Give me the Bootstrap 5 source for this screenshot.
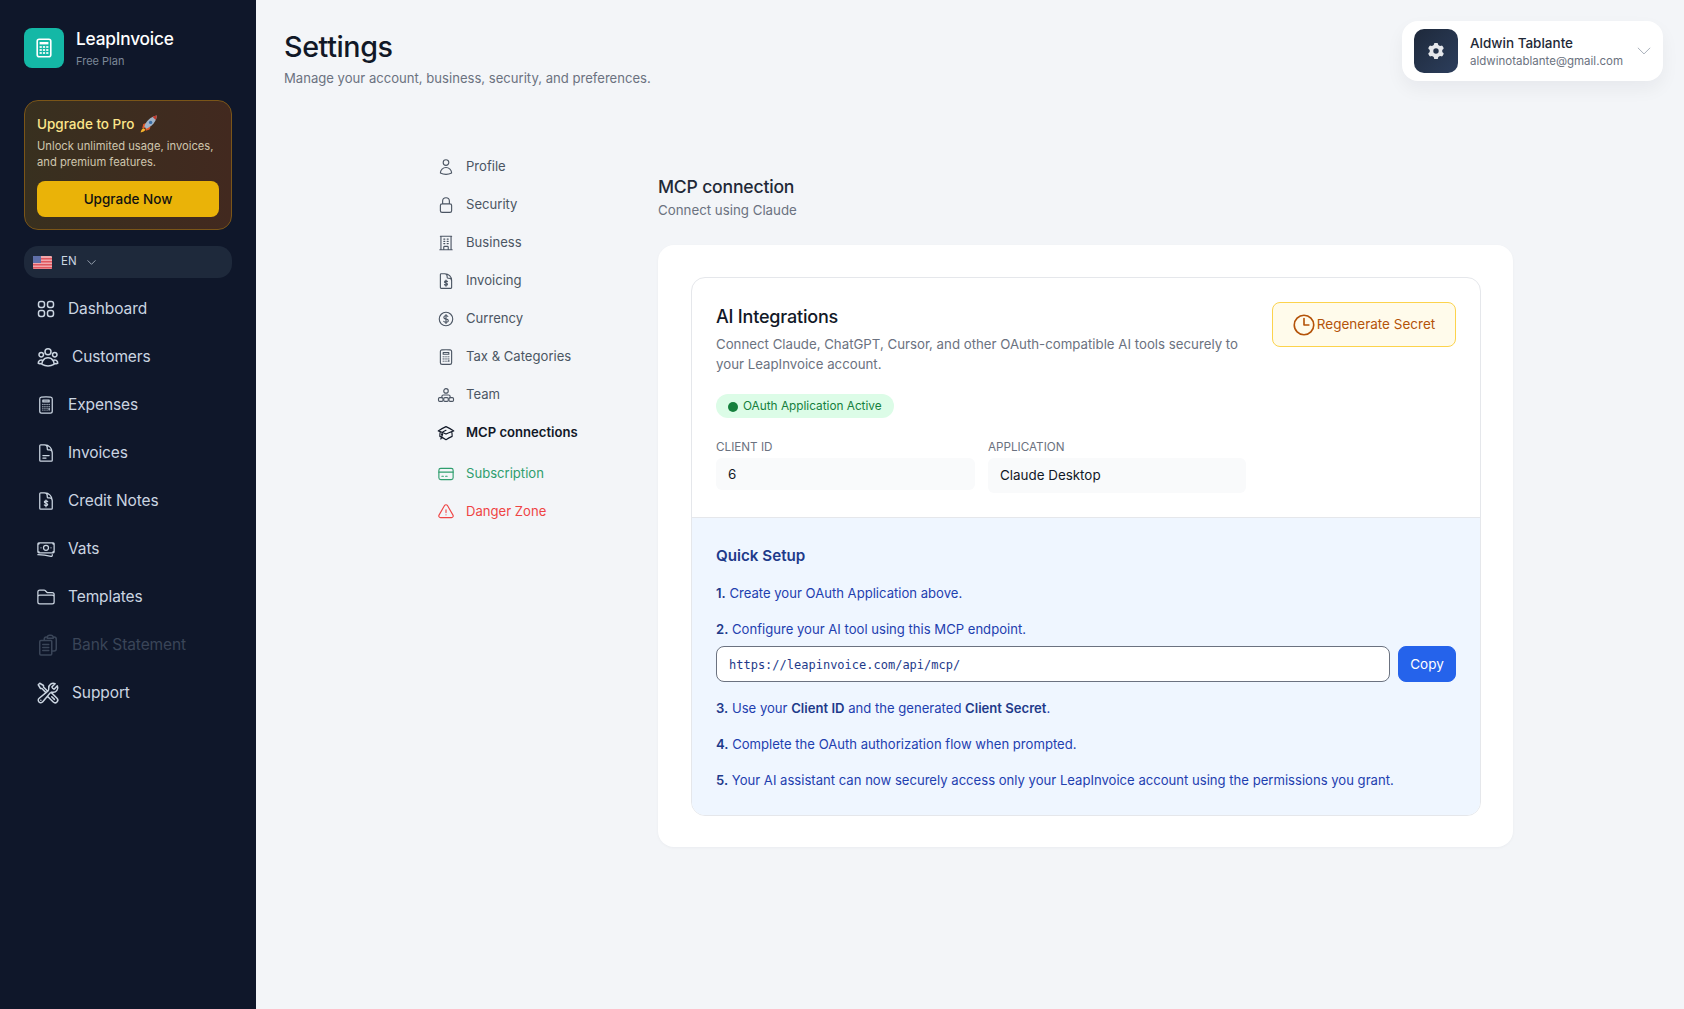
<!DOCTYPE html>
<html lang="en">
<head>
  <meta charset="UTF-8">
  <meta name="viewport" content="width=device-width, initial-scale=1.0">
  <title>LeapInvoice Settings</title>
  <link href="https://cdn.jsdelivr.net/npm/bootstrap@5.3.0/dist/css/bootstrap.min.css" rel="stylesheet">
  <style>
    body { font-family: Inter, "Noto Sans", sans-serif; background: #f3f5f8; color: #111827; height: 1009px; overflow: hidden; }
    svg { display: block; flex: none; }
    .ico { fill: none; stroke: currentColor; stroke-width: 1.5; stroke-linecap: round; stroke-linejoin: round; }

    /* sidebar */
    .side { width: 256px; height: 1009px; background: #0f172a; flex: none; padding: 26px 24px 0; }
    .logo-box { width: 40px; height: 40px; border-radius: 8px; background: #14b8a6; color: #fff; }
    .logo-name { font-size: 17.3px; font-weight: 500; color: #fff; line-height: 24px; letter-spacing: -.2px; margin-top: 1px; }
    .logo-plan { font-size: 11px; color: #7c8798; line-height: 16px; margin-top: 2px; }
    .promo { margin-top: 31px; height: 130px; border: 1px solid #7a5518; border-radius: 14px; padding: 13px 12px; background: linear-gradient(90deg, #38301f, #42291f); }
    .promo-title { font-size: 13.5px; font-weight: 500; color: #fde68a; height: 20px; }
    .promo-text { font-size: 11.2px; color: #cfc6ae; line-height: 16px; margin-top: 4px; }
    .promo-btn { height: 36px; margin-top: 11px; border-radius: 8px; background: #eab308; color: #111; font-size: 13.5px; font-weight: 500; line-height: 36px; text-align: center; }
    .lang { margin-top: 16px; height: 32px; border-radius: 14px; background: #1e293b; padding-left: 9px; color: #cbd5e1; font-size: 11.5px; gap: 9px; }
    .menu { margin-top: 7px; }
    .menu-item { height: 48px; padding-left: 12px; gap: 12px; color: #cbd5e1; font-size: 15.5px; letter-spacing: -.1px; }
    .menu-item.off { color: #3a4558; }

    /* page head */
    .page { min-width: 0; }
    .page-head { padding: 21px 21px 0 28px; height: 147px; }
    .page-title { font-size: 28.7px; font-weight: 500; line-height: 52px; margin: 0; color: #111827; letter-spacing: -.4px; }
    .page-sub { font-size: 13.1px; color: #6b7280; line-height: 20px; margin-top: -5px; }
    .user-box { width: 261px; height: 60px; background: #fff; border-radius: 16px; padding: 0 12px; gap: 12px; box-shadow: 0 8px 18px rgba(15, 23, 42, .05); }
    .user-pic { width: 44px; height: 44px; border-radius: 10px; background: linear-gradient(135deg, #1e293b, #2c3e5c); color: #e5e7eb; }
    .user-info { padding-top: 2px; }
    .user-name { font-size: 13.5px; font-weight: 500; line-height: 18px; color: #1f2937; }
    .user-mail { font-size: 11.5px; line-height: 17px; color: #6b7280; margin-top: 1px; }
    .user-caret { color: #9ca3af; }

    /* settings nav */
    .set-wrap { padding-left: 176px; }
    .set-nav { width: 226px; flex: none; margin-top: 1px; }
    .set-item { height: 38px; gap: 11px; padding-left: 5px; color: #4b5563; font-size: 13.1px; }
    .set-item.now { color: #111827; font-weight: 600; }
    .set-item.sub { color: #2f9e6e; margin-top: 3px; }
    .set-item.danger { color: #ef4444; }

    /* content */
    .set-main { width: 855px; flex: none; padding-top: 28px; }
    .sec-title { font-size: 17.6px; font-weight: 500; line-height: 24px; color: #1f2937; letter-spacing: -.2px; }
    .sec-sub { font-size: 13.3px; color: #6b7280; line-height: 20px; margin-top: 1px; }
    .big-box { margin-top: 25px; background: #fff; border-radius: 16px; padding: 32px 32px 32px 33px; height: 602px; box-shadow: 0 1px 3px rgba(15, 23, 42, .04); }
    .inner-box { border: 1px solid #e5e7eb; border-radius: 14px; overflow: hidden; height: 539px; }
    .top-part { height: 240px; padding: 24px 24px 0; border-bottom: 1px solid #e5e7eb; }
    .top-left { width: 531px; }
    .int-title { font-size: 18px; font-weight: 500; line-height: 26px; color: #111827; letter-spacing: -.2px; margin-top: 2px; }
    .int-text { font-size: 13.25px; line-height: 20px; color: #6b7280; margin-top: 4px; }
    .state-pill { height: 24px; margin-top: 20px; padding: 1px 12px 0; border-radius: 12px; background: #dcfce7; color: #15803d; font-size: 11.8px; gap: 5px; }
    .state-dot { width: 10px; height: 10px; border-radius: 50%; background: #15803d; }
    .fld-grid { grid-template-columns: 259px 258px; column-gap: 13px; align-items: start; }
    .fld-label { font-size: 11.7px; color: #6b7280; line-height: 16px; margin-top: 21px; }
    .fld-val { background: #f9fafb; border-radius: 6px; padding: 0 12px; margin-top: 3px; font-size: 13.4px; color: #111827; }
    .fld-a { height: 32px; }
    .fld-b { height: 35px; }
    .regen { width: 184px; height: 45px; margin-left: 25px; padding-right: 2px; border: 1px solid #fcd34d; border-radius: 8px; background: #fffbeb; color: #b45309; font-size: 13.5px; }
    .quick { height: 297px; background: #eff6ff; padding: 26px 24px; color: #1e40af; font-size: 13.1px; }
    .quick-title { font-size: 15.2px; font-weight: 600; color: #1e3a8a; line-height: 24px; }
    .step { line-height: 20px; margin-top: 16px; }
    .step-first { margin-top: 15px; }
    .step b { font-weight: 600; color: #1e3a8a; }
    .url-row { margin-top: 7px; }
    .url-input { height: 36px; border: 1px solid #6b7280; border-radius: 8px; padding: 1px 12px 0; font-family: "DejaVu Sans Mono", monospace; font-size: 12px; color: #1e3a8a; background: #fff; }
    .copy-btn { width: 58px; height: 36px; padding: 0; border-radius: 8px; background: #2563eb; border-color: #2563eb; font-size: 13.5px; }
  </style>
</head>
<body>
<div class="d-flex">
  <aside class="side">
    <div class="d-flex align-items-center gap-2">
      <div class="logo-box d-flex align-items-center justify-content-center me-1">
        <svg width="20" height="20" viewBox="0 0 20 20"><rect x="3.2" y="1.2" width="13.6" height="17.6" rx="2" fill="none" stroke="#fff" stroke-width="1.6"/><rect x="5.6" y="4" width="8.8" height="2.4" fill="#fff"/><g fill="#fff" opacity=".85"><rect x="5.6" y="8" width="2.2" height="2"/><rect x="8.9" y="8" width="2.2" height="2"/><rect x="12.2" y="8" width="2.2" height="2"/><rect x="5.6" y="11" width="2.2" height="2"/><rect x="8.9" y="11" width="2.2" height="2"/><rect x="12.2" y="11" width="2.2" height="2"/><rect x="5.6" y="14" width="2.2" height="2"/><rect x="8.9" y="14" width="2.2" height="2"/><rect x="12.2" y="14" width="2.2" height="2"/></g></svg>
      </div>
      <div>
        <div class="logo-name">LeapInvoice</div>
        <div class="logo-plan">Free Plan</div>
      </div>
    </div>

    <div class="promo">
      <div class="promo-title d-flex align-items-center gap-1">Upgrade to Pro
        <svg width="21" height="21" viewBox="0 0 20 20"><path d="M7 13l-3 .5 1-4 3-1z" fill="#e0582a"/><path d="M7 13l.5 3 3.500-1.200 1-3z" fill="#e0582a"/><path d="M2.500 17.500c.3-2 1.200-3.600 3-4l1.500 1.500c-.5 1.600-2.400 2.300-4.500 2.500z" fill="#f7b32b"/><path d="M6 12c1.500-5 6-9.500 12-10.500C17.500 7.500 13 12 8 14z" fill="#9fb3c8"/><path d="M18 1.500c-.2 1.500-.6 2.900-1.200 4.200l-3-3c1.300-.6 2.700-1 4.200-1.200z" fill="#c0392b"/><circle cx="12" cy="8" r="1.600" fill="#3b6ea5"/></svg>
      </div>
      <div class="promo-text">Unlock unlimited usage, invoices, and premium features.</div>
      <div class="promo-btn">Upgrade Now</div>
    </div>

    <div class="lang d-flex align-items-center">
      <svg width="19" height="13" viewBox="0 0 19 13"><rect width="19" height="13" rx="1" fill="#f1a7ab"/><g fill="#e0575f"><rect y="2" width="19" height="1.500"/><rect y="5" width="19" height="1.500"/><rect y="8" width="19" height="1.500"/><rect y="11" width="19" height="1.500"/></g><rect width="8" height="7" fill="#5f6fa8"/></svg>
      <span>EN</span>
      <svg class="ico" width="11" height="11" viewBox="0 0 24 24"><path d="m4 8 8 8 8-8"/></svg>
    </div>

    <nav class="menu">
      <div class="menu-item d-flex align-items-center">
        <svg class="ico" width="20" height="20" viewBox="0 0 20 20"><rect x="2.500" y="2.500" width="6" height="6" rx="2.200"/><rect x="11.500" y="2.500" width="6" height="6" rx="2.200"/><rect x="2.500" y="11.500" width="6" height="6" rx="2.200"/><rect x="11.500" y="11.500" width="6" height="6" rx="2.200"/></svg>
        <span>Dashboard</span>
      </div>
      <div class="menu-item d-flex align-items-center">
        <svg class="ico" width="24" height="24" viewBox="0 0 24 24"><path d="M18 18.720a9.094 9.094 0 0 0 3.741-.479 3 3 0 0 0-4.682-2.720m.94 3.198.001.031c0 .225-.012.447-.037.666A11.944 11.944 0 0 1 12 21c-2.170 0-4.207-.576-5.963-1.584A6.062 6.062 0 0 1 6 18.719m12 0a5.971 5.971 0 0 0-.941-3.197m0 0A5.995 5.995 0 0 0 12 12.750a5.995 5.995 0 0 0-5.058 2.772m0 0a3 3 0 0 0-4.681 2.720 8.986 8.986 0 0 0 3.740.477m.94-3.197a5.971 5.971 0 0 0-.94 3.197M15 6.750a3 3 0 1 1-6 0 3 3 0 0 1 6 0Zm6 3a2.250 2.250 0 1 1-4.500 0 2.250 2.250 0 0 1 4.500 0Zm-13.500 0a2.250 2.250 0 1 1-4.500 0 2.250 2.250 0 0 1 4.500 0Z"/></svg>
        <span>Customers</span>
      </div>
      <div class="menu-item d-flex align-items-center">
        <svg class="ico" width="20" height="20" viewBox="0 0 24 24"><path d="M15.750 15.750V18m-7.500-6.750h.008v.008H8.250v-.008Zm0 2.250h.008v.008H8.250V13.500Zm0 2.250h.008v.008H8.250v-.008Zm0 2.250h.008v.008H8.250V18Zm2.498-6.750h.007v.008h-.007v-.008Zm0 2.250h.007v.008h-.007V13.500Zm0 2.250h.007v.008h-.007v-.008Zm0 2.250h.007v.008h-.007V18Zm2.504-6.750h.008v.008h-.008v-.008Zm0 2.250h.008v.008h-.008V13.500Zm0 2.250h.008v.008h-.008v-.008Zm0 2.250h.008v.008h-.008V18Zm2.498-6.750h.008v.008h-.008v-.008Zm0 2.250h.008v.008h-.008V13.500ZM8.250 6h7.500v2.250h-7.500V6ZM12 2.250c-1.892 0-3.758.110-5.593.322C5.307 2.700 4.500 3.650 4.500 4.757V19.500a2.250 2.250 0 0 0 2.250 2.250h10.500a2.250 2.250 0 0 0 2.250-2.250V4.757c0-1.108-.806-2.057-1.907-2.185A48.507 48.507 0 0 0 12 2.250Z"/></svg>
        <span>Expenses</span>
      </div>
      <div class="menu-item d-flex align-items-center">
        <svg class="ico" width="20" height="20" viewBox="0 0 24 24"><path d="M19.500 14.250v-2.625a3.375 3.375 0 0 0-3.375-3.375h-1.500A1.125 1.125 0 0 1 13.500 7.125v-1.500a3.375 3.375 0 0 0-3.375-3.375H8.250m0 12.750h7.500m-7.500 3H12M10.500 2.250H5.625c-.621 0-1.125.504-1.125 1.125v17.250c0 .621.504 1.125 1.125 1.125h12.750c.621 0 1.125-.504 1.125-1.125V11.250a9 9 0 0 0-9-9Z"/></svg>
        <span>Invoices</span>
      </div>
      <div class="menu-item d-flex align-items-center">
        <svg class="ico" width="20" height="20" viewBox="0 0 24 24"><path d="M19.500 14.250v-2.625a3.375 3.375 0 0 0-3.375-3.375h-1.500A1.125 1.125 0 0 1 13.500 7.125v-1.500a3.375 3.375 0 0 0-3.375-3.375H8.250M10.500 2.250H5.625c-.621 0-1.125.504-1.125 1.125v17.250c0 .621.504 1.125 1.125 1.125h12.750c.621 0 1.125-.504 1.125-1.125V11.250a9 9 0 0 0-9-9Z"/><path d="M14 12.800c-.5-.6-1.200-.9-2-.9-1.200 0-2 .6-2 1.400 0 1.900 4 1 4 2.900 0 .8-.8 1.400-2 1.400-.8 0-1.500-.3-2-.9M12 10.800v8.200"/></svg>
        <span>Credit Notes</span>
      </div>
      <div class="menu-item d-flex align-items-center">
        <svg class="ico" width="20" height="20" viewBox="0 0 24 24"><path d="M2.250 18.750a60.070 60.070 0 0 1 15.797 2.101c.727.198 1.453-.342 1.453-1.096V18.750M3.750 4.500v.75A.75.75 0 0 1 3 6h-.75m0 0v-.375c0-.621.504-1.125 1.125-1.125H20.250M2.250 6v9m18-10.500v.75c0 .414.336.75.75.75h.75m-1.500-1.500h.375c.621 0 1.125.504 1.125 1.125v9.750c0 .621-.504 1.125-1.125 1.125h-.375m1.500-1.500H21a.75.75 0 0 0-.75.75v.75m0 0H3.750m0 0h-.375a1.125 1.125 0 0 1-1.125-1.125V15m1.500 1.500v-.75A.75.75 0 0 0 3 15h-.75M15 10.500a3 3 0 1 1-6 0 3 3 0 0 1 6 0Zm3 0h.008v.008H18V10.500Zm-12 0h.008v.008H6V10.500Z"/></svg>
        <span>Vats</span>
      </div>
      <div class="menu-item d-flex align-items-center">
        <svg class="ico" width="20" height="20" viewBox="0 0 24 24"><path d="M2.250 12.750V12A2.250 2.250 0 0 1 4.500 9.750h15A2.250 2.250 0 0 1 21.750 12v.75m-8.690-6.440-2.120-2.120a1.500 1.500 0 0 0-1.061-.44H4.500A2.250 2.250 0 0 0 2.250 6v12a2.250 2.250 0 0 0 2.250 2.250h15A2.250 2.250 0 0 0 21.750 18V9a2.250 2.250 0 0 0-2.250-2.250h-5.379a1.500 1.500 0 0 1-1.060-.44Z"/></svg>
        <span>Templates</span>
      </div>
      <div class="menu-item off d-flex align-items-center">
        <svg class="ico" width="24" height="24" viewBox="0 0 24 24"><path d="M8.250 7.500V6.108c0-1.135.845-2.098 1.976-2.192.373-.03.748-.057 1.123-.08M15.750 18H18a2.250 2.250 0 0 0 2.250-2.250V6.108c0-1.135-.845-2.098-1.976-2.192a48.424 48.424 0 0 0-1.123-.08M15.750 18.750v2c0 .621-.504 1.125-1.125 1.125h-9.750A1.125 1.125 0 0 1 3.750 20.750V8.625c0-.621.504-1.125 1.125-1.125H15c.414 0 .75.336.75.750ZM17.150 3.836A2.251 2.251 0 0 0 15 2.250h-1.500a2.251 2.251 0 0 0-2.150 1.586m5.800 0c.065.21.1.433.1.664v.75h-6V4.500c0-.231.035-.454.1-.664M6.750 11.500h6m-6 3h6m-6 3h6"/></svg>
        <span>Bank Statement</span>
      </div>
      <div class="menu-item d-flex align-items-center">
        <svg class="ico" width="24" height="24" viewBox="0 0 24 24"><path d="M11.420 15.170 17.250 21A2.652 2.652 0 0 0 21 17.250l-5.877-5.877M11.420 15.170l2.496-3.030c.317-.384.74-.626 1.208-.766M11.420 15.170l-4.655 5.653a2.548 2.548 0 1 1-3.586-3.586l6.837-5.630m5.108-.233c.55-.164 1.163-.188 1.743-.14a4.500 4.500 0 0 0 4.486-6.336l-3.276 3.277a3.004 3.004 0 0 1-2.250-2.250l3.276-3.276a4.500 4.500 0 0 0-6.336 4.486c.091 1.076-.071 2.264-.904 2.950l-.102.085m-1.745 1.437L5.909 7.500H4.500L2.250 3.750l1.500-1.500L7.500 4.500v1.409l4.260 4.260m-1.745 1.437 1.745-1.437m6.615 8.206L15.750 15.750M4.867 19.125h.008v.008h-.008v-.008Z"/></svg>
        <span>Support</span>
      </div>
    </nav>
  </aside>

  <main class="page flex-grow-1">
    <header class="page-head d-flex justify-content-between align-items-start">
      <div>
        <h1 class="page-title">Settings</h1>
        <div class="page-sub">Manage your account, business, security, and preferences.</div>
      </div>
      <div class="user-box d-flex align-items-center">
        <div class="user-pic d-flex align-items-center justify-content-center">
          <svg width="18" height="18" viewBox="0 0 20 20"><path fill="currentColor" fill-rule="evenodd" d="M7.840 1.804A1 1 0 0 1 8.820 1h2.360a1 1 0 0 1 .98.804l.331 1.652a6.993 6.993 0 0 1 1.929 1.115l1.598-.54a1 1 0 0 1 1.186.447l1.180 2.044a1 1 0 0 1-.205 1.251l-1.267 1.113a7.047 7.047 0 0 1 0 2.228l1.267 1.113a1 1 0 0 1 .206 1.250l-1.180 2.045a1 1 0 0 1-1.187.447l-1.598-.54a6.993 6.993 0 0 1-1.929 1.115l-.33 1.652a1 1 0 0 1-.98.804H8.820a1 1 0 0 1-.98-.804l-.331-1.652a6.993 6.993 0 0 1-1.929-1.115l-1.598.54a1 1 0 0 1-1.186-.447l-1.180-2.044a1 1 0 0 1 .205-1.251l1.267-1.114a7.050 7.050 0 0 1 0-2.227L1.821 7.773a1 1 0 0 1-.206-1.250l1.180-2.045a1 1 0 0 1 1.187-.447l1.598.54A6.992 6.992 0 0 1 7.510 3.456l.33-1.652ZM10 13a3 3 0 1 0 0-6 3 3 0 0 0 0 6Z"/></svg>
        </div>
        <div class="user-info flex-grow-1">
          <div class="user-name">Aldwin Tablante</div>
          <div class="user-mail">aldwinotablante@gmail.com</div>
        </div>
        <svg class="ico user-caret" width="14" height="14" viewBox="0 0 24 24"><path d="m2 7 10 10L22 7"/></svg>
      </div>
    </header>

    <div class="set-wrap d-flex align-items-start">
      <nav class="set-nav">
        <div class="set-item d-flex align-items-center">
          <svg class="ico" width="18" height="18" viewBox="0 0 24 24"><path d="M15.750 6a3.750 3.750 0 1 1-7.500 0 3.750 3.750 0 0 1 7.500 0ZM4.501 20.118a7.500 7.500 0 0 1 14.998 0A17.933 17.933 0 0 1 12 21.750c-2.676 0-5.216-.584-7.499-1.632Z"/></svg>
          <span>Profile</span>
        </div>
        <div class="set-item d-flex align-items-center">
          <svg class="ico" width="18" height="18" viewBox="0 0 24 24"><path d="M16.500 10.500V6.750a4.500 4.500 0 1 0-9 0v3.750m-.75 11.250h10.500a2.250 2.250 0 0 0 2.250-2.250v-6.750a2.250 2.250 0 0 0-2.250-2.250H6.750a2.250 2.250 0 0 0-2.250 2.250v6.750a2.250 2.250 0 0 0 2.250 2.250Z"/></svg>
          <span>Security</span>
        </div>
        <div class="set-item d-flex align-items-center">
          <svg class="ico" width="18" height="18" viewBox="0 0 24 24"><path d="M3.750 21h16.500M4.500 3h15M5.250 3v18m13.500-18v18M9 6.750h1.500m-1.500 3h1.500m-1.500 3h1.500m3-6H15m-1.500 3H15m-1.500 3H15M9 21v-3.375c0-.621.504-1.125 1.125-1.125h3.750c.621 0 1.125.504 1.125 1.125V21"/></svg>
          <span>Business</span>
        </div>
        <div class="set-item d-flex align-items-center">
          <svg class="ico" width="18" height="18" viewBox="0 0 24 24"><path d="M19.500 14.250v-2.625a3.375 3.375 0 0 0-3.375-3.375h-1.500A1.125 1.125 0 0 1 13.500 7.125v-1.500a3.375 3.375 0 0 0-3.375-3.375H8.250M10.500 2.250H5.625c-.621 0-1.125.504-1.125 1.125v17.250c0 .621.504 1.125 1.125 1.125h12.750c.621 0 1.125-.504 1.125-1.125V11.250a9 9 0 0 0-9-9Z"/><path d="M14 12.800c-.5-.6-1.200-.9-2-.9-1.200 0-2 .6-2 1.400 0 1.900 4 1 4 2.900 0 .8-.8 1.400-2 1.400-.8 0-1.500-.3-2-.9M12 10.800v8.200"/></svg>
          <span>Invoicing</span>
        </div>
        <div class="set-item d-flex align-items-center">
          <svg class="ico" width="18" height="18" viewBox="0 0 24 24"><path d="M12 6v12m-3-2.818.879.659c1.171.879 3.070.879 4.242 0 1.172-.879 1.172-2.303 0-3.182C13.536 12.219 12.768 12 12 12c-.725 0-1.450-.22-2.003-.659-1.106-.879-1.106-2.303 0-3.182s2.900-.879 4.006 0l.415.33M21 12a9 9 0 1 1-18 0 9 9 0 0 1 18 0Z"/></svg>
          <span>Currency</span>
        </div>
        <div class="set-item d-flex align-items-center">
          <svg class="ico" width="18" height="18" viewBox="0 0 24 24"><path d="M15.750 15.750V18m-7.500-6.750h.008v.008H8.250v-.008Zm0 2.250h.008v.008H8.250V13.500Zm0 2.250h.008v.008H8.250v-.008Zm0 2.250h.008v.008H8.250V18Zm2.498-6.750h.007v.008h-.007v-.008Zm0 2.250h.007v.008h-.007V13.500Zm0 2.250h.007v.008h-.007v-.008Zm0 2.250h.007v.008h-.007V18Zm2.504-6.750h.008v.008h-.008v-.008Zm0 2.250h.008v.008h-.008V13.500Zm0 2.250h.008v.008h-.008v-.008Zm0 2.250h.008v.008h-.008V18Zm2.498-6.750h.008v.008h-.008v-.008Zm0 2.250h.008v.008h-.008V13.500ZM8.250 6h7.500v2.250h-7.500V6ZM12 2.250c-1.892 0-3.758.110-5.593.322C5.307 2.700 4.500 3.650 4.500 4.757V19.500a2.250 2.250 0 0 0 2.250 2.250h10.500a2.250 2.250 0 0 0 2.250-2.250V4.757c0-1.108-.806-2.057-1.907-2.185A48.507 48.507 0 0 0 12 2.250Z"/></svg>
          <span>Tax &amp; Categories</span>
        </div>
        <div class="set-item d-flex align-items-center">
          <svg class="ico" width="18" height="18" viewBox="0 0 24 24"><circle cx="12" cy="6.500" r="3"/><path d="M6.500 15.500v-1.500a2 2 0 0 1 2-2h7a2 2 0 0 1 2 2v1.500"/><rect x="2" y="15.500" width="6" height="5" rx="1.500"/><rect x="9" y="15.500" width="6" height="5" rx="1.500"/><rect x="16" y="15.500" width="6" height="5" rx="1.500"/></svg>
          <span>Team</span>
        </div>
        <div class="set-item now d-flex align-items-center">
          <svg class="ico" width="18" height="18" viewBox="0 0 24 24"><path d="M4.260 10.147a60.438 60.438 0 0 0-.491 6.347A48.620 48.620 0 0 1 12 20.904a48.620 48.620 0 0 1 8.232-4.410 60.460 60.460 0 0 0-.491-6.347m-15.482 0a50.636 50.636 0 0 0-2.658-.813A59.906 59.906 0 0 1 12 3.493a59.903 59.903 0 0 1 10.399 5.840c-.896.248-1.783.52-2.658.814m-15.482 0A50.717 50.717 0 0 1 12 13.489a50.702 50.702 0 0 1 7.740-3.342M6.750 15a.75.75 0 1 0 0-1.500.75.75 0 0 0 0 1.500Zm0 0v-3.675A55.378 55.378 0 0 1 12 8.443m-7.007 11.550A5.981 5.981 0 0 0 6.750 15.750v-1.500"/></svg>
          <span>MCP connections</span>
        </div>
        <div class="set-item sub d-flex align-items-center">
          <svg class="ico" width="18" height="18" viewBox="0 0 24 24"><rect x="2.500" y="4.500" width="19" height="15" rx="2.500"/><path d="M2.500 9.500h19M6.500 15h2m3 0h2"/></svg>
          <span>Subscription</span>
        </div>
        <div class="set-item danger d-flex align-items-center">
          <svg class="ico" width="18" height="18" viewBox="0 0 24 24"><path d="M12 9v3.750m-9.303 3.376c-.866 1.500.217 3.374 1.948 3.374h14.710c1.730 0 2.813-1.874 1.948-3.374L13.949 3.378c-.866-1.500-3.032-1.500-3.898 0L2.697 16.126ZM12 15.750h.007v.008H12v-.008Z"/></svg>
          <span>Danger Zone</span>
        </div>
      </nav>

      <section class="set-main">
        <div class="sec-title">MCP connection</div>
        <div class="sec-sub">Connect using Claude</div>

        <div class="big-box">
          <div class="inner-box">
            <div class="top-part d-flex align-items-start">
              <div class="top-left">
                <div class="int-title">AI Integrations</div>
                <div class="int-text">Connect Claude, ChatGPT, Cursor, and other OAuth-compatible AI tools securely to your LeapInvoice account.</div>
                <div class="state-pill d-inline-flex align-items-center"><span class="state-dot"></span>OAuth Application Active</div>
                <div class="fld-grid d-grid">
                  <div>
                    <div class="fld-label">CLIENT ID</div>
                    <div class="fld-val fld-a d-flex align-items-center">6</div>
                  </div>
                  <div>
                    <div class="fld-label">APPLICATION</div>
                    <div class="fld-val fld-b d-flex align-items-center">Claude Desktop</div>
                  </div>
                </div>
              </div>
              <div class="regen d-flex align-items-center justify-content-center">
                <svg class="ico" width="26" height="26" viewBox="0 0 24 24"><path d="M12 6v6h4.500m4.500 0a9 9 0 1 1-18 0 9 9 0 0 1 18 0Z"/></svg>
                <span>Regenerate Secret</span>
              </div>
            </div>
            <div class="quick">
              <div class="quick-title">Quick Setup</div>
              <div class="step step-first"><b>1.</b> Create your OAuth Application above.</div>
              <div class="step"><b>2.</b> Configure your AI tool using this MCP endpoint.</div>
              <div class="url-row d-flex gap-2">
                <input class="url-input flex-grow-1" value="https://leapinvoice.com/api/mcp/" readonly>
                <button class="btn btn-primary copy-btn">Copy</button>
              </div>
              <div class="step"><b>3.</b> Use your <b>Client ID</b> and the generated <b>Client Secret</b>.</div>
              <div class="step"><b>4.</b> Complete the OAuth authorization flow when prompted.</div>
              <div class="step"><b>5.</b> Your AI assistant can now securely access only your LeapInvoice account using the permissions you grant.</div>
            </div>
          </div>
        </div>
      </section>
    </div>
  </main>
</div>
<script src="https://cdn.jsdelivr.net/npm/bootstrap@5.3.0/dist/js/bootstrap.bundle.min.js"></script>
</body>
</html>
